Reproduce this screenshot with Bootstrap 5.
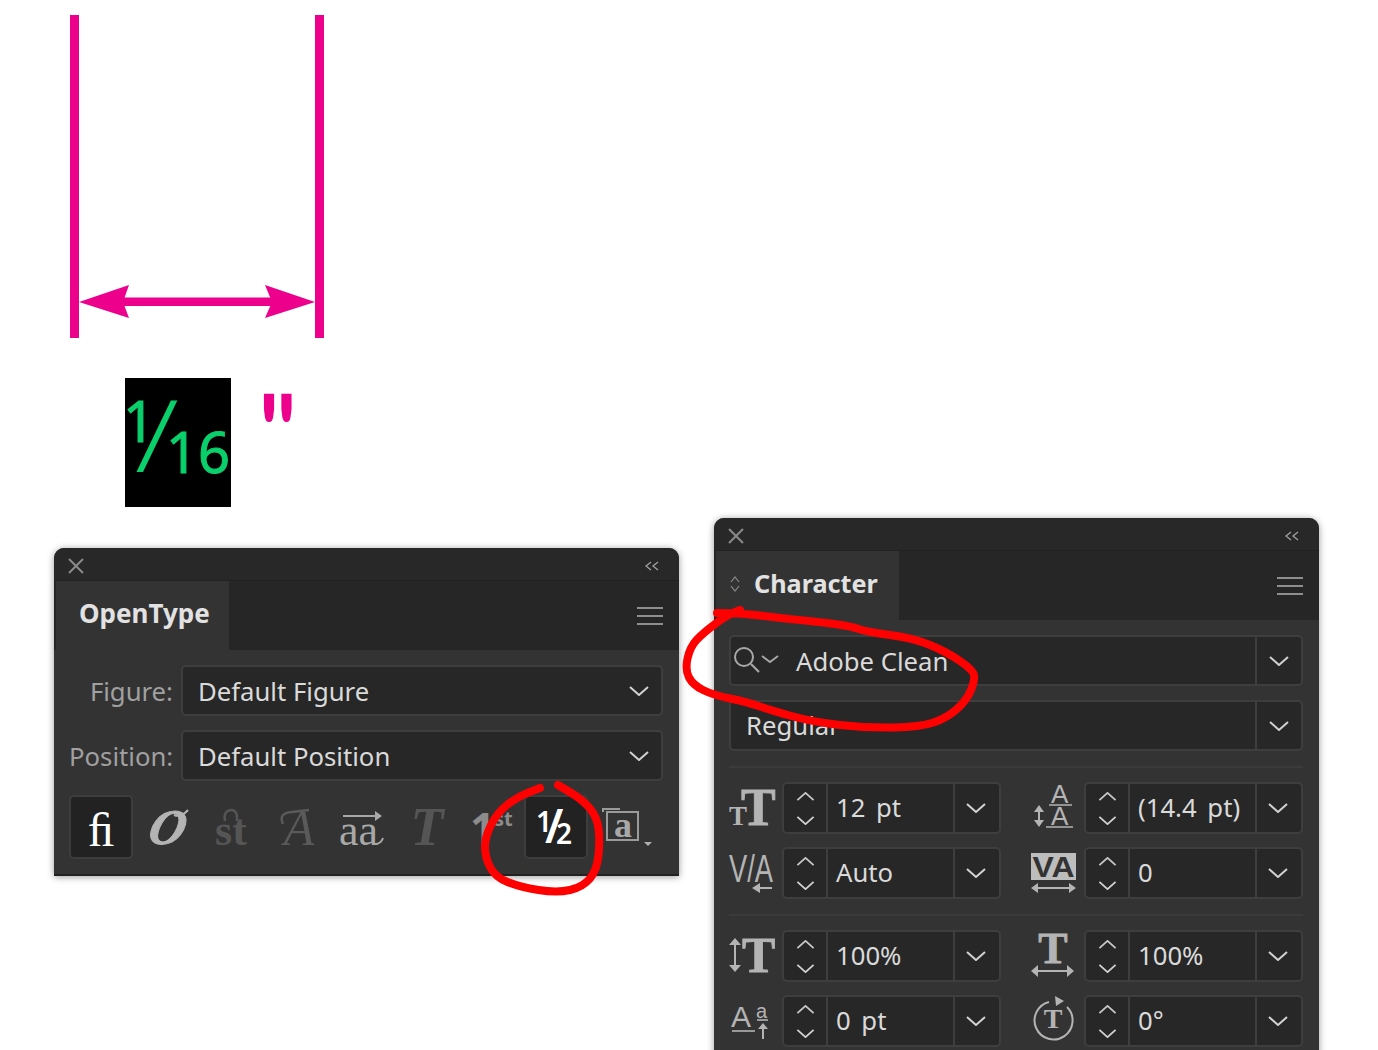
<!DOCTYPE html>
<html lang="en">
<head>
<meta charset="utf-8">
<title>OpenType fractions</title>
<link href="https://cdn.jsdelivr.net/npm/bootstrap@5.3.0/dist/css/bootstrap.min.css" rel="stylesheet">
<style>
html,body{margin:0;background:#fff;overflow:hidden}
.stage{position:relative;width:1378px;height:1050px;overflow:hidden;background:#fff;font-family:"Noto Sans","Open Sans",sans-serif}
.layer{position:absolute;left:0;top:0;pointer-events:none}
.win{position:absolute;background:#333;border-radius:10px 10px 0 0;box-shadow:0 1px 7px rgba(0,0,0,.4);color:#d8d8d8}
.win-ot{left:54px;top:548px;width:625px;height:328px;border-bottom:2px solid #222}
.win-ch{left:714px;top:518px;width:605px;height:560px}
.titlebar{height:33px;background:#282828;border-bottom:1px solid #222;border-radius:10px 10px 0 0;padding:4px 20px 0 14px}
.tabrow{height:69px;background:#262626;padding-left:2px;padding-right:16px}
.tabhead{width:173px;height:69px;padding-bottom:4px;background:#333;font-size:26px;font-weight:700;color:#e2e2e2}
.tabhead-ot{padding-left:23px}
.tabhead-ch{width:183px;padding-left:14px;gap:14px;font-size:25.2px}
.panelbody{padding:15px 16px 0 15px}
.fieldlabel{width:104px;flex:none;text-align:right;white-space:nowrap;font-size:25.7px;color:#a0a0a0;margin-right:8px;line-height:1}
.field{height:51px;background:#272727;border:2px solid #3e3e3e;border-radius:5px;font-size:25.7px;color:#dadada;line-height:1}
.field-main{padding-left:15px;padding-right:12px}
.lowered{padding-top:2px}
.nudge-lbl{padding-top:2px}
.searchico{margin-left:2px;margin-right:2px;flex:none}
.nameinset{padding-left:15px}
.drop{width:46px;height:100%;border-left:2px solid #3e3e3e}
.spin{width:44px;height:100%;border-right:2px solid #3e3e3e;gap:15px}
.num{width:219px;height:52px}
.num .drop{padding-right:3px}
.numtext{padding-left:8px;line-height:1;word-spacing:4px}
.half{width:272px;gap:7px}
.ico{width:46px;height:52px;flex:none;overflow:visible}
.sep{height:2px;background:#3b3b3b;margin:15px 0 14px}
.stacked{margin-top:14px}
.rowgap{margin-top:13px}
.glyrow{margin-top:14px;column-gap:1px}
.gly{width:64px;height:64px;flex:none;border:2px solid transparent;border-radius:5px}
.gly-on{background:#222;border-color:#3d3d3d}
.svgtext{font-family:"Liberation Serif",serif}
</style>
</head>
<body>
<svg width="0" height="0" class="position-absolute">
  <symbol id="chev" viewBox="0 0 20 10"><path d="M1 1l9 8 9-8" fill="none" stroke="#d2d2d2" stroke-width="2"/></symbol>
  <symbol id="chevup" viewBox="0 0 20 10"><path d="M1 9l9-8 9 8" fill="none" stroke="#c8c8c8" stroke-width="2"/></symbol>
</svg>
<div class="stage">

  <svg class="layer" width="340" height="520" viewBox="0 0 340 520">
    <rect x="70" y="15" width="9" height="323" fill="#ec008c"/>
    <rect x="315" y="15" width="9" height="323" fill="#ec008c"/>
    <rect x="120" y="297.500" width="155" height="8.500" fill="#ec008c"/>
    <path d="M79 302 129 285 123 302 129 318ZM315 302 265 285 272 302 265 318Z" fill="#ec008c"/>
    <rect x="125" y="378" width="106" height="129" fill="#000"/>
    <g fill="#0ad06c" stroke="#0ad06c" stroke-width="1" font-family="Noto Sans, sans-serif">
      <text x="123" y="442" font-size="56">1</text>
      <text x="166" y="473" font-size="56">16</text>
    </g>
    <text transform="translate(259 470) scale(1.48 1.66)" font-family="Lato, sans-serif" font-weight="700" font-size="64" fill="#ec008c">"</text>
    <text transform="translate(135 472) scale(1.3 1)" fill="#0ad06c" font-family="Open Sans, sans-serif" font-weight="300" font-size="99">/</text>
  </svg>

  <section class="win win-ot">
    <div class="titlebar d-flex align-items-center justify-content-between">
      <svg width="16" height="16" viewBox="0 0 16 16"><path d="M1 1l14 14M15 1 1 15" stroke="#8a8a8a" stroke-width="2"/></svg>
      <svg width="14" height="10" viewBox="0 0 14 10"><path d="M6 1 1 5l5 4M13 1 8 5l5 4" fill="none" stroke="#a0a0a0" stroke-width="1.300"/></svg>
    </div>
    <div class="tabrow d-flex align-items-center justify-content-between">
      <div class="tabhead tabhead-ot d-flex align-items-center">OpenType</div>
      <svg width="26" height="18" viewBox="0 0 26 18"><path d="M0 1h26M0 9h26M0 17h26" stroke="#8e8e8e" stroke-width="2"/></svg>
    </div>
    <div class="panelbody">
      <div class="d-flex align-items-center">
        <span class="fieldlabel nudge-lbl">Figure:</span>
        <div class="field field-main flex-grow-1 d-flex align-items-center justify-content-between">
          <span class="lowered">Default Figure</span>
          <svg width="20" height="10"><use href="#chev"/></svg>
        </div>
      </div>
      <div class="d-flex align-items-center stacked">
        <span class="fieldlabel nudge-lbl">Position:</span>
        <div class="field field-main flex-grow-1 d-flex align-items-center justify-content-between">
          <span class="lowered">Default Position</span>
          <svg width="20" height="10"><use href="#chev"/></svg>
        </div>
      </div>
      <div class="d-flex glyrow">
        <div class="gly gly-on"><svg width="60" height="60" class="svgtext"><text x="30" y="49" text-anchor="middle" font-size="48" fill="#fff">ﬁ</text></svg></div>
        <div class="gly"><svg width="60" height="60" class="svgtext"><text transform="translate(28 47) skewX(-14)" text-anchor="middle" font-size="50" font-weight="700" font-style="italic" fill="#b4b4b4" stroke="#b4b4b4" stroke-width="1">O</text><path d="M38 18Q45 21 52 13" fill="none" stroke="#b4b4b4" stroke-width="2"/></svg></div>
        <div class="gly"><svg width="60" height="60" class="svgtext"><text x="30" y="48" text-anchor="middle" font-size="44" font-weight="700" fill="#555">st</text><path d="M24 24Q22 14 30 13Q37 13 36 24" fill="none" stroke="#555" stroke-width="2.500"/></svg></div>
        <div class="gly"><svg width="60" height="60" class="svgtext"><text x="33" y="48" text-anchor="middle" font-size="50" font-style="italic" fill="#5a5a5a">A</text><path d="M17 27Q12 16 26 15Q34 14 43 13" fill="none" stroke="#5a5a5a" stroke-width="2.500"/></svg></div>
        <div class="gly"><svg width="60" height="60" class="svgtext"><path d="M12 19h36" stroke="#a8a8a8" stroke-width="2"/><path d="M44 14l7 5-7 5z" fill="#a8a8a8"/><text x="8" y="48" font-size="44" fill="#a8a8a8">aa</text><path d="M44 47Q50 47 52 41" fill="none" stroke="#a8a8a8" stroke-width="2"/></svg></div>
        <div class="gly"><svg width="60" height="60" class="svgtext"><text x="31" y="48" text-anchor="middle" font-size="54" font-style="italic" font-weight="700" fill="#555">T</text></svg></div>
        <div class="gly"><svg width="60" height="60" overflow="visible"><text x="9" y="48" font-size="44" font-weight="700" fill="#8c8c8c">1</text><text x="33" y="29" font-size="20" font-weight="700" fill="#8c8c8c">st</text></svg></div>
        <div class="gly gly-on"><svg width="60" height="60" overflow="visible"><g font-weight="600" fill="#fff"><text x="10" y="35" font-size="28">1</text><text x="19" y="46" font-size="46">/</text><text x="30" y="47" font-size="28">2</text></g></svg></div>
        <div class="gly"><svg width="66" height="60" overflow="visible" class="svgtext"><path d="M12 15V12H29" fill="none" stroke="#9a9a9a" stroke-width="2"/><rect x="16" y="15" width="31" height="28" fill="none" stroke="#9a9a9a" stroke-width="2"/><text x="32" y="40" text-anchor="middle" font-size="36" font-weight="700" fill="#a8a8a8">a</text><path d="M53 45h8l-4 4z" fill="#b0b0b0"/></svg></div>
      </div>
    </div>
  </section>

  <section class="win win-ch">
    <div class="titlebar d-flex align-items-center justify-content-between">
      <svg width="16" height="16" viewBox="0 0 16 16"><path d="M1 1l14 14M15 1 1 15" stroke="#8a8a8a" stroke-width="2"/></svg>
      <svg width="14" height="10" viewBox="0 0 14 10"><path d="M6 1 1 5l5 4M13 1 8 5l5 4" fill="none" stroke="#a0a0a0" stroke-width="1.300"/></svg>
    </div>
    <div class="tabrow d-flex align-items-center justify-content-between">
      <div class="tabhead tabhead-ch d-flex align-items-center">
        <svg width="10" height="16" viewBox="0 0 10 16"><path d="M1 6l4-5 4 5M1 10l4 5 4-5" fill="none" stroke="#8a8a8a" stroke-width="1.200"/></svg>
        <span>Character</span>
      </div>
      <svg width="26" height="18" viewBox="0 0 26 18"><path d="M0 1h26M0 9h26M0 17h26" stroke="#8e8e8e" stroke-width="2"/></svg>
    </div>
    <div class="panelbody">
      <div class="field d-flex align-items-center">
        <svg class="searchico" width="46" height="30" viewBox="0 0 46 30"><circle cx="11" cy="11" r="9" fill="none" stroke="#a8a8a8" stroke-width="2"/><path d="M18 18l8 8" stroke="#a8a8a8" stroke-width="2.200"/><path d="M29 10l8 6 8-6" fill="none" stroke="#a8a8a8" stroke-width="1.800"/></svg>
        <span class="flex-grow-1 nameinset lowered">Adobe Clean</span>
        <div class="drop d-flex align-items-center justify-content-center"><svg width="20" height="10"><use href="#chev"/></svg></div>
      </div>
      <div class="field d-flex align-items-center stacked">
        <span class="flex-grow-1 nameinset">Regular</span>
        <div class="drop d-flex align-items-center justify-content-center"><svg width="20" height="10"><use href="#chev"/></svg></div>
      </div>
      <div class="sep"></div>

      <div class="d-flex justify-content-between">
        <div class="half d-flex">
          <svg class="ico svgtext" viewBox="0 0 46 52"><text x="0" y="43" font-size="27" font-weight="700" fill="#b4b4b4">T</text><text x="12" y="43" font-size="52" font-weight="700" fill="#b4b4b4" stroke="#b4b4b4" stroke-width=".8">T</text></svg>
          <div class="field num d-flex align-items-center">
            <div class="spin d-flex flex-column align-items-center justify-content-center"><svg width="19" height="9"><use href="#chevup"/></svg><svg width="19" height="9"><use href="#chev"/></svg></div>
            <span class="numtext flex-grow-1">12 pt</span>
            <div class="drop d-flex align-items-center justify-content-center"><svg width="20" height="10"><use href="#chev"/></svg></div>
          </div>
        </div>
        <div class="half d-flex">
          <svg class="ico" viewBox="0 0 46 52"><g font-family="Liberation Sans, sans-serif" fill="#b4b4b4" font-size="26"><text x="20" y="21">A</text><text x="20" y="43">A</text></g><path d="M18 23h23M15 45h27" stroke="#b4b4b4" stroke-width="1.500"/><path d="M8 25v18" stroke="#b4b4b4" stroke-width="2"/><path d="M3 30l5-7 5 7zM3 38l5 7 5-7z" fill="#b4b4b4"/></svg>
          <div class="field num d-flex align-items-center">
            <div class="spin d-flex flex-column align-items-center justify-content-center"><svg width="19" height="9"><use href="#chevup"/></svg><svg width="19" height="9"><use href="#chev"/></svg></div>
            <span class="numtext flex-grow-1">(14.4 pt)</span>
            <div class="drop d-flex align-items-center justify-content-center"><svg width="20" height="10"><use href="#chev"/></svg></div>
          </div>
        </div>
      </div>

      <div class="d-flex justify-content-between rowgap">
        <div class="half d-flex">
          <svg class="ico" viewBox="0 0 46 52"><text x="0" y="35" font-family="Liberation Sans, sans-serif" font-size="38" fill="#b4b4b4" textLength="44" lengthAdjust="spacingAndGlyphs">V/A</text><path d="M27 41h16" stroke="#b4b4b4" stroke-width="2"/><path d="M23 41l8-5v10z" fill="#b4b4b4"/></svg>
          <div class="field num d-flex align-items-center">
            <div class="spin d-flex flex-column align-items-center justify-content-center"><svg width="19" height="9"><use href="#chevup"/></svg><svg width="19" height="9"><use href="#chev"/></svg></div>
            <span class="numtext flex-grow-1">Auto</span>
            <div class="drop d-flex align-items-center justify-content-center"><svg width="20" height="10"><use href="#chev"/></svg></div>
          </div>
        </div>
        <div class="half d-flex">
          <svg class="ico" viewBox="0 0 46 52"><rect x="0" y="6" width="45" height="27" fill="#bdbdbd"/><text x="22.500" y="30" text-anchor="middle" font-family="Liberation Sans, sans-serif" font-weight="700" font-size="30" fill="#333" textLength="42" lengthAdjust="spacingAndGlyphs">VA</text><path d="M4 41h37" stroke="#b4b4b4" stroke-width="2"/><path d="M0 41l7-5v10zM45 41l-7-5v10z" fill="#b4b4b4"/></svg>
          <div class="field num d-flex align-items-center">
            <div class="spin d-flex flex-column align-items-center justify-content-center"><svg width="19" height="9"><use href="#chevup"/></svg><svg width="19" height="9"><use href="#chev"/></svg></div>
            <span class="numtext flex-grow-1">0</span>
            <div class="drop d-flex align-items-center justify-content-center"><svg width="20" height="10"><use href="#chev"/></svg></div>
          </div>
        </div>
      </div>
      <div class="sep"></div>

      <div class="d-flex justify-content-between">
        <div class="half d-flex">
          <svg class="ico" viewBox="0 0 46 52"><text class="svgtext" x="13" y="42" font-size="50" font-weight="700" fill="#b4b4b4" stroke="#b4b4b4" stroke-width=".8">T</text><path d="M6 12v26" stroke="#b4b4b4" stroke-width="2"/><path d="M0 15l6-7 6 7zM0 35l6 7 6-7z" fill="#b4b4b4"/></svg>
          <div class="field num d-flex align-items-center">
            <div class="spin d-flex flex-column align-items-center justify-content-center"><svg width="19" height="9"><use href="#chevup"/></svg><svg width="19" height="9"><use href="#chev"/></svg></div>
            <span class="numtext flex-grow-1">100%</span>
            <div class="drop d-flex align-items-center justify-content-center"><svg width="20" height="10"><use href="#chev"/></svg></div>
          </div>
        </div>
        <div class="half d-flex">
          <svg class="ico" viewBox="0 0 46 52"><text class="svgtext" x="22" y="33" text-anchor="middle" font-size="44" font-weight="700" fill="#b4b4b4" stroke="#b4b4b4" stroke-width=".8">T</text><path d="M4 41h36" stroke="#b4b4b4" stroke-width="2"/><path d="M0 41l7-6v12zM43 41l-7-6v12z" fill="#b4b4b4"/></svg>
          <div class="field num d-flex align-items-center">
            <div class="spin d-flex flex-column align-items-center justify-content-center"><svg width="19" height="9"><use href="#chevup"/></svg><svg width="19" height="9"><use href="#chev"/></svg></div>
            <span class="numtext flex-grow-1">100%</span>
            <div class="drop d-flex align-items-center justify-content-center"><svg width="20" height="10"><use href="#chev"/></svg></div>
          </div>
        </div>
      </div>

      <div class="d-flex justify-content-between rowgap">
        <div class="half d-flex">
          <svg class="ico" viewBox="0 0 46 52"><g font-family="Liberation Sans, sans-serif" fill="#b4b4b4"><text x="2" y="32" font-size="30">A</text><text x="27" y="23" font-size="20">a</text></g><path d="M3 36h23" stroke="#b4b4b4" stroke-width="1.600"/><path d="M28 25h11" stroke="#b4b4b4" stroke-width="1.600"/><path d="M34 33v11" stroke="#b4b4b4" stroke-width="2"/><path d="M29 34l5-6 5 6z" fill="#b4b4b4"/></svg>
          <div class="field num d-flex align-items-center">
            <div class="spin d-flex flex-column align-items-center justify-content-center"><svg width="19" height="9"><use href="#chevup"/></svg><svg width="19" height="9"><use href="#chev"/></svg></div>
            <span class="numtext flex-grow-1">0 pt</span>
            <div class="drop d-flex align-items-center justify-content-center"><svg width="20" height="10"><use href="#chev"/></svg></div>
          </div>
        </div>
        <div class="half d-flex">
          <svg class="ico" viewBox="0 0 46 52"><path d="M18 7A19 19 0 1 0 36 12" fill="none" stroke="#b4b4b4" stroke-width="2"/><path d="M24 1l9 5-8 5z" fill="#b4b4b4"/><text class="svgtext" x="22" y="33" text-anchor="middle" font-size="28" font-weight="700" fill="#b4b4b4">T</text></svg>
          <div class="field num d-flex align-items-center">
            <div class="spin d-flex flex-column align-items-center justify-content-center"><svg width="19" height="9"><use href="#chevup"/></svg><svg width="19" height="9"><use href="#chev"/></svg></div>
            <span class="numtext flex-grow-1">0°</span>
            <div class="drop d-flex align-items-center justify-content-center"><svg width="20" height="10"><use href="#chev"/></svg></div>
          </div>
        </div>
      </div>
    </div>
  </section>

  <svg class="layer" width="1378" height="1050" viewBox="0 0 1378 1050">
    <g fill="none" stroke="#f00" stroke-width="8" stroke-linecap="round" stroke-linejoin="round">
      <path d="M540 788L528.500 792.500Q517 797 507 805Q497 813 491 825Q485 837 485 847Q485 857 490 867Q495 877 507.500 882Q520 887 538.500 890Q557 893 570 890Q583 887 590 878.500Q597 870 598.500 855Q600 840 598.500 828.500Q597 817 590 808.500Q583 800 570.500 792.500L558 785"/>
      <path d="M717 613Q740 613 760 615.500Q780 618 813.500 621.500Q847 625 857 628.500Q867 632 890 635Q913 638 930 645Q947 652 960 661Q973 670 974 675Q975 680 971 690Q967 700 957 709Q947 718 933.500 722.500Q920 727 893.500 727.500Q867 728 840 725Q813 722 791.500 716Q770 710 758.500 706Q747 702 730 698.500Q713 695 703 690Q693 685 689 677.500Q685 670 687.500 658.500Q690 647 696.500 640Q703 633 716.500 623Q730 613 740 610"/>
    </g>
  </svg>
</div>
<script src="https://cdn.jsdelivr.net/npm/bootstrap@5.3.0/dist/js/bootstrap.bundle.min.js"></script>
</body>
</html>
